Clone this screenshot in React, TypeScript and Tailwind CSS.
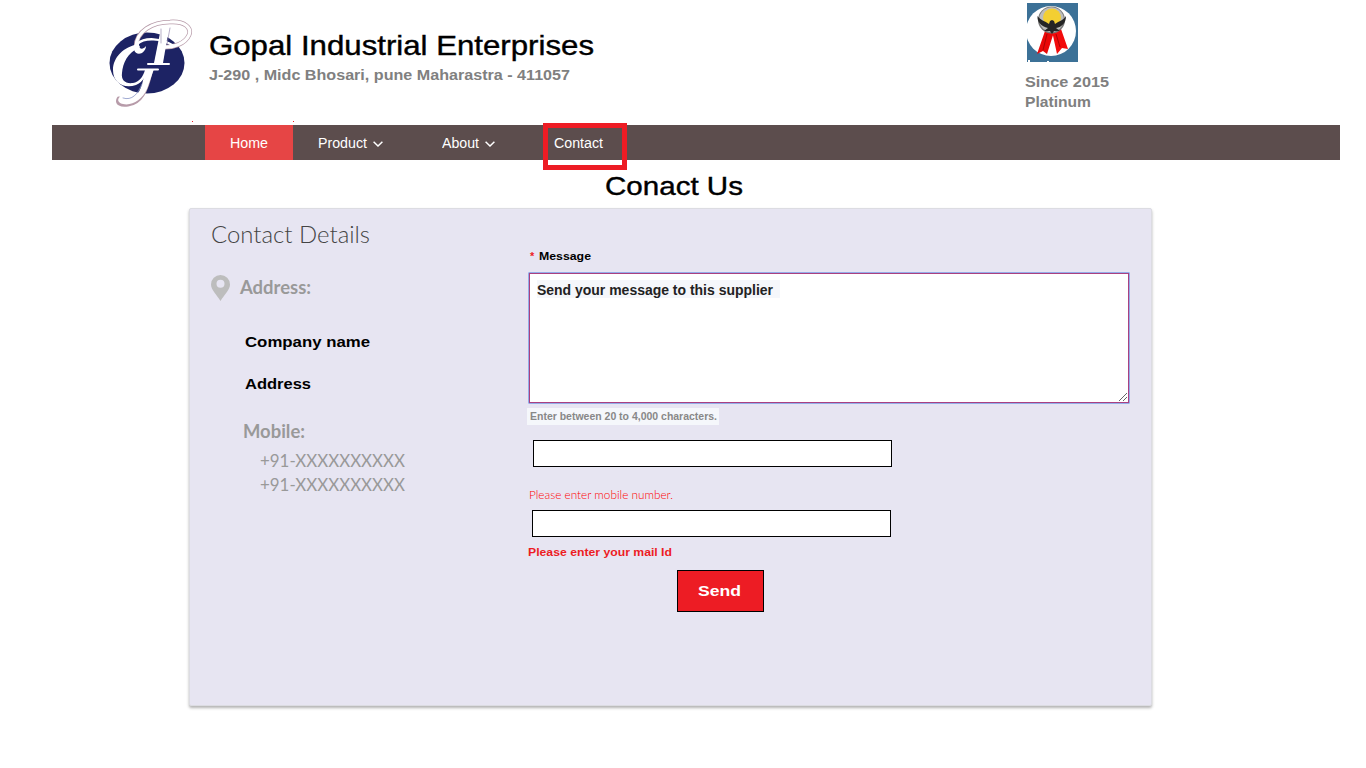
import { useLayoutEffect, useRef } from "react";

/* One line of text, stretched horizontally to a given width. */
function Line({ width, className = "", children }: { width: number; className?: string; children: string }) {
  const ref = useRef<HTMLSpanElement>(null);
  useLayoutEffect(() => {
    const el = ref.current;
    if (!el) return;
    el.style.transform = "none";
    el.style.transform = `scaleX(${width / el.getBoundingClientRect().width})`;
  }, [width, children]);
  return (
    <div className={"flex justify-start " + className} style={{ width }}>
      <span ref={ref} className="block shrink-0 origin-left whitespace-nowrap">
        {children}
      </span>
    </div>
  );
}

function Logo() {
  return (
    <svg className="h-[90px] w-[84px] shrink-0" viewBox="0 0 84 90" fill="none" strokeLinecap="round" strokeLinejoin="round">
      <ellipse cx="38" cy="44" rx="37.500" ry="30.500" fill="#1d2364" />
      <g stroke="#b79ba9">
        <path d="M27 28C27 12 44 3 61 3C76 2 83 9 80 16C76 25 64 29 52 28" strokeWidth="4.600" />
        <path d="M41 53C37 72 31 84 19 85C12 86 8 84 10 80" strokeWidth="5" />
      </g>
      <g stroke="#fff">
        <path d="M27 28C27 12 44 3 61 3C76 2 83 9 80 16C76 25 64 29 52 28" strokeWidth="3.200" />
        <path d="M28 25C36 18 52 19 65 27" strokeWidth="2.500" />
        <path d="M49 9.500H60M39 45H60M29 50.500H49" strokeWidth="2" />
      </g>
      <g fill="#fff">
        <path d="M52 9H60L54 44H45Z" />
        <path d="M27 23C22 31 27 37 33 34C36 32 37 29 37 27C34 31 30 31 30 25Z" />
        <path d="M29 25C15 28 4 38 4 51C4 64 15 70 27 66C34 63 37 57 38 51H36C34 58 30 63 24 64C16 65 12 61 13 54C14 44 18 34 31 28Z" />
        <path d="M37 50H45L38 70C33 81 23 87 14 85C8 84 8 79 12 77C14 82 23 81 29 74C33 69 34 60 37 50Z" />
      </g>
      <path d="M52 10V24M61 9L58 25" stroke="#9a8db0" strokeWidth=".7" />
      <path d="M14 79C23 82 29 75 33 65" stroke="#8996c7" strokeWidth=".8" />
    </svg>
  );
}

function Award() {
  return (
    <svg className="ml-0.5 h-[59px] w-[51px]" viewBox="0 0 51 59">
      <rect width="51" height="59" fill="#3c7197" />
      <circle cx="24" cy="28" r="25" fill="#fff" />
      <path d="M18 28L27 29L20 51L16 48L10 51Z" fill="#e90808" />
      <path d="M25 28L34 26L41 46L35 45L30 51Z" fill="#f20b0b" />
      <path d="M20 31L16 47M29 31L33 44" stroke="#a90505" strokeWidth="1" />
      <circle cx="24.500" cy="17" r="13.500" fill="#777" />
      <circle cx="24.500" cy="16.500" r="12.300" fill="#bdbdbb" />
      <circle cx="25" cy="14.500" r="9" fill="#f3cf32" />
      <path d="M10.500 13C13 17 18 18 22 21L23 18L25 17L27 18L28 21C32 18 37 17 39 13C39 20 35 24 29 25L33 28L27 28L25 31L23 28L17 28L21 25C14 23 10 19 10.500 13Z" fill="#252525" />
      <path d="M1 59V57H3V59M20 59V58H22V59" fill="#fff" />
    </svg>
  );
}

function Chevron() {
  return (
    <svg className="mt-0.5 h-[6px] w-[10px]" viewBox="0 0 10 6" fill="none" stroke="#fff" strokeWidth="1.500">
      <path d="M.6 .8L5 5L9.400 .8" />
    </svg>
  );
}

export default function App() {
  return (
    <div className="h-[768px] w-[1366px] overflow-hidden bg-white font-['Liberation_Sans',Arial,sans-serif] text-black">
      <header className="relative flex h-[125px] items-start">
        <div className="mt-[19px] ml-[109px] w-[100px]">
          <Logo />
        </div>
        <div className="mt-[30px] w-[816px]">
          <Line width={385} className="text-[28px] leading-8 [-webkit-text-stroke:0.4px_#000]">Gopal Industrial Enterprises</Line>
          <Line width={361} className="mt-[3px] text-[14.5px] leading-5 font-bold text-[#808080]">
            J-290 , Midc Bhosari, pune Maharastra - 411057
          </Line>
        </div>
        <div className="mt-[3px]">
          <Award />
          <div className="mt-2.5 text-[15px] leading-5 font-bold text-[#808080]">
            <Line width={84}>Since 2015</Line>
            <Line width={66}>Platinum</Line>
          </div>
        </div>
        <i className="absolute top-[121px] left-[192px] size-px bg-[#ed1c24]" />
        <i className="absolute top-[121px] left-[293px] size-px bg-[#ed1c24]" />
      </header>

      <nav className="ml-[52px] flex h-[35px] w-[1288px] bg-[#5c4d4d] pl-[153px] text-[14px] leading-[36px] text-white">
        <a className="flex w-[88px] bg-[#e64545] pl-[25px]"><Line width={38}>Home</Line></a>
        <a className="flex w-[124px] items-center gap-1.5 pl-[25px]"><Line width={49}>Product</Line> <Chevron /></a>
        <a className="flex w-[126px] items-center gap-1.5 pl-[25px]"><Line width={37}>About</Line> <Chevron /></a>
        <a className="relative pl-[11px]">
          <Line width={49}>Contact</Line>
          <span className="absolute -top-0.5 left-0 h-[47px] w-[84px] border-5 border-[#ed1c24]" />
        </a>
      </nav>

      <h1 className="mt-[10px] ml-[605px]">
        <Line width={138} className="text-[26px] leading-8 [-webkit-text-stroke:0.4px_#000]">Conact Us</Line>
      </h1>

      <main className="mt-1.5 ml-[189px] flex h-[498px] w-[963px] rounded-[2px] border border-[#dcdce2] bg-[#e7e5f2] shadow-[0_2px_3px_rgba(0,0,0,0.3)]">
        <section className="w-[338px] pt-[9px] pl-[21px] font-['Lato',sans-serif]">
          <h2>
            <Line width={159} className="text-[24px] leading-8 font-light text-[#444]">Contact Details</Line>
          </h2>
          <div className="mt-[24px] flex h-[28px] items-start">
            <svg className="mt-px h-[26px] w-[19px]" viewBox="0 0 19 26">
              <path fillRule="evenodd" d="M9.500 0A9.500 9.500 0 0 0 0 9.500C0 15 6 20 9.500 26C13 20 19 15 19 9.500A9.500 9.500 0 0 0 9.500 0ZM9.500 4.800A4 4 0 1 1 9.500 12.800A4 4 0 0 1 9.500 4.800Z" fill="#bdbdbd" />
            </svg>
            <Line width={71} className="ml-[9.5px] text-[18px] leading-[26px] font-bold text-[#999]">Address:</Line>
          </div>
          <div className="mt-[30px] ml-[34px] font-['Liberation_Sans',Arial,sans-serif] text-[15px] leading-5 font-bold">
            <Line width={125}>Company name</Line>
            <Line width={66} className="mt-[22px]">Address</Line>
          </div>
          <div className="mt-[25px] ml-[32px] text-[18px] leading-6 text-[#999]">
            <Line width={62} className="font-bold">Mobile:</Line>
            <div className="mt-[5px] ml-[17px]">
              <Line width={145}>+91-XXXXXXXXXX</Line>
              <Line width={145}>+91-XXXXXXXXXX</Line>
            </div>
          </div>
        </section>

        <form className="w-[603px] pt-[39px]">
          <label className="ml-0.5 flex text-[11px] leading-4 font-bold">
            <span className="w-[9px] text-[#ed1c24]">*</span>
            <Line width={52}>Message</Line>
          </label>
          <div className="mt-2 flex h-[132px] w-[602px] items-start justify-between rounded-[1px] border border-[#94ade9]">
            <div className="relative h-full w-full border border-[#aa4080] bg-white pt-1.5 pl-[7px]">
              <div className="h-[18px] w-[243px] bg-[#f5f7fb]">
                <Line width={236} className="text-[14px] leading-5 font-bold text-[#222]">Send your message to this supplier</Line>
              </div>
              <svg className="absolute right-px bottom-px size-2" viewBox="0 0 8 8" stroke="#555" strokeWidth=".9">
                <path d="M0 8L8 0M4 8L8 4" />
              </svg>
            </div>
          </div>
          <div className="mt-1 -ml-px h-[17px] w-[192px] bg-[#f5f7fb] pl-[3px]">
            <Line width={187} className="text-[11px] leading-4 font-bold text-[#888]">Enter between 20 to 4,000 characters.</Line>
          </div>
          <input aria-label="Mobile number" className="mt-[15px] ml-[5px] block h-[27px] w-[359px] border border-black bg-white" />
          <Line width={144} className="mt-5 ml-px font-['Lato',sans-serif] text-[12px] leading-4 font-light text-[#f00]">
            Please enter mobile number.
          </Line>
          <input aria-label="Email" className="mt-[7px] ml-1 block h-[27px] w-[359px] border border-black bg-white" />
          <Line width={144} className="mt-[7px] text-[11px] leading-4 font-bold text-[#ed1c24]">Please enter your mail Id</Line>
          <button type="button" className="mt-[10px] ml-[149px] flex h-[42px] w-[87px] items-center border border-black bg-[#ed1c24] pl-5 text-[15px] leading-5 font-bold text-white">
            <Line width={43}>Send</Line>
          </button>
        </form>
      </main>
    </div>
  );
}
